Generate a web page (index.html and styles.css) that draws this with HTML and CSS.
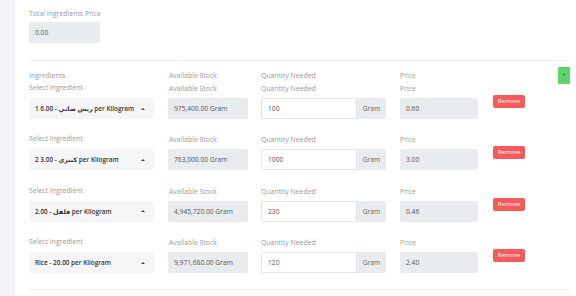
FILE: index.html
```html
<!DOCTYPE html>
<html lang="en">
<head>
    <meta charset="UTF-8">
    <title>Ingredients</title>
    <link rel="stylesheet" href="styles.css">
</head>
<body>
    <div class="sidebar"></div>

    <div class="main">
        <div class="total">
            <div class="label">Total Ingredients Price</div>
            <div class="box total-box">0.00</div>
        </div>

        <div class="divider"></div>

        <div class="head-row">
            <div class="label">Ingredients</div>
            <div class="label">Available Stock</div>
            <div class="label">Quantity Needed</div>
            <div class="label">Price</div>
            <div class="add-btn"><span>+</span></div>
        </div>

        <div class="rows">
            <div class="ing-row">
                <div class="cell">
                    <div class="label">Select Ingredient</div>
                    <div class="select"><span class="select-text">1 ريش ضاني - 6.00 per Kilogram</span><span class="caret"></span></div>
                </div>
                <div class="cell">
                    <div class="label">Available Stock</div>
                    <div class="box stock">975,400.00 Gram</div>
                </div>
                <div class="cell">
                    <div class="label">Quantity Needed</div>
                    <div class="qty"><div class="qty-input">100</div><div class="addon">Gram</div></div>
                </div>
                <div class="cell">
                    <div class="label">Price</div>
                    <div class="box price">0.60</div>
                </div>
                <div class="cell">
                    <div class="remove-btn">Remove</div>
                </div>
            </div>

            <div class="ing-row">
                <div class="cell">
                    <div class="label">Select Ingredient</div>
                    <div class="select"><span class="select-text">2 كنتري - 3.00 per Kilogram</span><span class="caret"></span></div>
                </div>
                <div class="cell">
                    <div class="label">Available Stock</div>
                    <div class="box stock">763,000.00 Gram</div>
                </div>
                <div class="cell">
                    <div class="label">Quantity Needed</div>
                    <div class="qty"><div class="qty-input">1000</div><div class="addon">Gram</div></div>
                </div>
                <div class="cell">
                    <div class="label">Price</div>
                    <div class="box price">3.00</div>
                </div>
                <div class="cell">
                    <div class="remove-btn">Remove</div>
                </div>
            </div>

            <div class="ing-row">
                <div class="cell">
                    <div class="label">Select Ingredient</div>
                    <div class="select"><span class="select-text">فلفل - 2.00 per Kilogram</span><span class="caret"></span></div>
                </div>
                <div class="cell">
                    <div class="label">Available Stock</div>
                    <div class="box stock">4,945,720.00 Gram</div>
                </div>
                <div class="cell">
                    <div class="label">Quantity Needed</div>
                    <div class="qty"><div class="qty-input">230</div><div class="addon">Gram</div></div>
                </div>
                <div class="cell">
                    <div class="label">Price</div>
                    <div class="box price">0.46</div>
                </div>
                <div class="cell">
                    <div class="remove-btn">Remove</div>
                </div>
            </div>

            <div class="ing-row">
                <div class="cell">
                    <div class="label">Select Ingredient</div>
                    <div class="select"><span class="select-text">Rice - 20.00 per Kilogram</span><span class="caret"></span></div>
                </div>
                <div class="cell">
                    <div class="label">Available Stock</div>
                    <div class="box stock">9,971,680.00 Gram</div>
                </div>
                <div class="cell">
                    <div class="label">Quantity Needed</div>
                    <div class="qty"><div class="qty-input">120</div><div class="addon">Gram</div></div>
                </div>
                <div class="cell">
                    <div class="label">Price</div>
                    <div class="box price">2.40</div>
                </div>
                <div class="cell">
                    <div class="remove-btn">Remove</div>
                </div>
            </div>
        </div>

        <div class="divider bottom"></div>
    </div>
</body>
</html>
```

FILE: styles.css
```css
* {
    margin: 0;
    padding: 0;
    box-sizing: border-box;
}

body {
    display: flex;
    width: 576px;
    height: 296px;
    overflow: hidden;
    background: #fff;
    font-family: 'Open Sans', 'DejaVu Sans', sans-serif;
    font-size: 6.7px;
    color: #555;
}

.sidebar {
    width: 15px;
    flex-shrink: 0;
    background: #f2f2f9;
}

.main {
    flex: 1;
    padding: 9px 6px 0 14px;
}

.label {
    line-height: 9px;
    font-size: 6.9px;
    color: #9a9a9a;
}

.box {
    height: 21px;
    line-height: 21px;
    background: #e9ecef;
    border-radius: 2px;
    padding-left: 6px;
    color: #555;
}

.total .box {
    margin-top: 4px;
    width: 71px;
}

.divider {
    height: 1px;
    background: #eeeef0;
    margin-top: 17px;
}

.head-row,
.ing-row {
    display: grid;
    grid-template-columns: 139px 93px 139px 93px 1fr;
}

.head-row {
    margin-top: 6px;
    height: 17px;
    align-items: center;
}

.head-row .label:nth-child(2),
.ing-row .cell:nth-child(2) .label {
    padding-left: 1px;
}

.add-btn {
    justify-self: end;
    width: 12px;
    height: 17px;
    background: #5dd36c;
    border-radius: 1px;
    display: flex;
    justify-content: center;
    align-items: center;
}

.add-btn span {
    font-size: 5px;
    line-height: 5px;
    font-weight: bold;
    color: #1f4f24;
}

.rows {
    display: flex;
    flex-direction: column;
    gap: 16.4px;
}

.ing-row .label {
    margin-bottom: 5px;
}

.ing-row .cell:first-child .label {
    margin-top: -1px;
    margin-bottom: 6px;
}

.select {
    width: 125px;
    height: 21px;
    background: #f6f6f8;
    border-radius: 2px;
    display: flex;
    align-items: center;
    justify-content: space-between;
    padding: 0 9px 0 6px;
}

.select-text {
    font-size: 6.4px;
    font-weight: 600;
    color: #333;
}

.caret {
    width: 0;
    height: 0;
    border-left: 2px solid transparent;
    border-right: 2px solid transparent;
    border-bottom: 2.5px solid #444;
}

.stock {
    width: 80px;
}

.price {
    width: 78px;
}

.qty {
    display: flex;
    width: 125px;
    height: 21px;
}

.qty-input {
    flex: 1;
    line-height: 19px;
    border: 1px solid #e2e4e8;
    border-radius: 2px 0 0 2px;
    padding-left: 6px;
    color: #555;
}

.addon {
    width: 29px;
    line-height: 21px;
    text-align: center;
    background: #e9ecef;
    border-radius: 0 2px 2px 0;
    color: #666;
}

.ing-row .cell:last-child {
    padding-top: 11px;
}

.remove-btn {
    width: 32px;
    height: 13px;
    line-height: 13px;
    text-align: center;
    background: #f55a5c;
    color: #fff;
    font-size: 6px;
    border-radius: 2px;
}

.divider.bottom {
    margin-top: 16px;
}
```
